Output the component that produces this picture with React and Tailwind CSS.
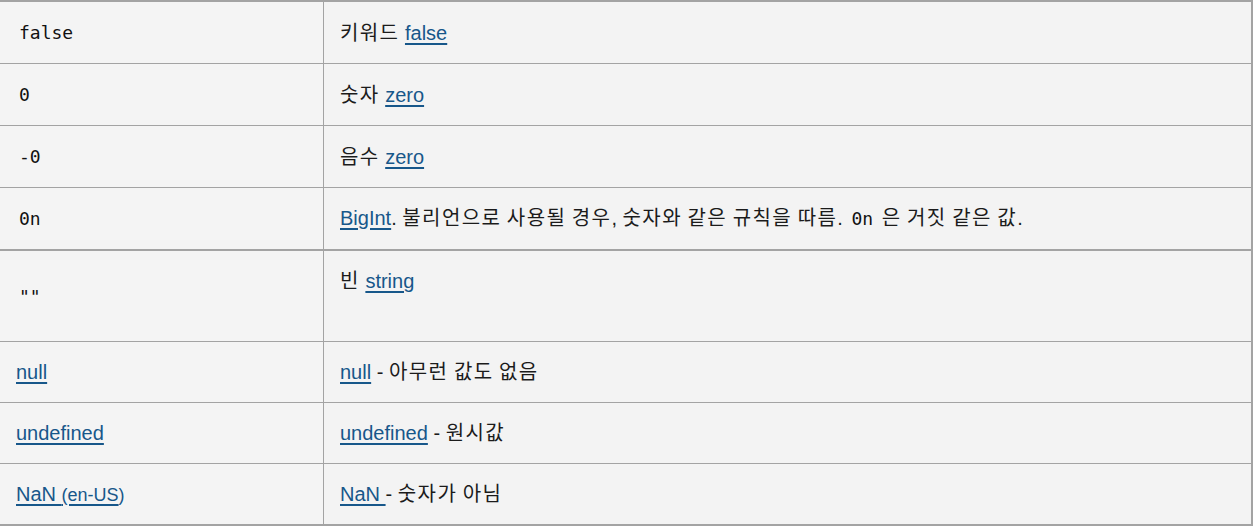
import React from "react";

const A = ({ children }) => (
  <a href="#" className="text-[#17578a] underline underline-offset-[3px] decoration-[1.5px]">
    {children}
  </a>
);

const K = ({ children }) => <span className="tracking-[1.4px]">{children}</span>;

const Code = ({ children }) => (
  <code className="px-[3px] text-[18px] text-[#111111]" style={{ fontFamily: '"DejaVu Sans Mono", monospace' }}>
    {children}
  </code>
);

function Row({ left, right, h, border = "border-b", rightTop = false }) {
  return (
    <div className={`flex ${border} border-[#a3a3a3]`} style={{ height: h }}>
      <div className="w-[324px] shrink-0 border-r border-[#a3a3a3] flex items-center pl-4 bg-[#f4f4f4]">
        <div className="leading-[30px]">{left}</div>
      </div>
      <div className={`flex-1 flex ${rightTop ? "items-start pt-[15px]" : "items-center"} pl-4 bg-[#f3f3f3]`}>
        <div className="leading-[30px]">{right}</div>
      </div>
    </div>
  );
}

export default function App() {
  return (
    <div
      className="w-[1253px] h-[526px] border-t-2 border-r-2 border-b-2 border-[#a3a3a3] bg-[#f4f4f4] text-[20px] text-[#1b1b1b]"
      style={{ fontFamily: '"Liberation Sans", Arial, "Noto Sans CJK KR", sans-serif' }}
    >
      <Row h={62} left={<Code>false</Code>} right={<><K>키워드</K> <A>false</A></>} />
      <Row h={62} left={<Code>0</Code>} right={<><K>숫자</K> <A>zero</A></>} />
      <Row h={62} left={<Code>-0</Code>} right={<><K>음수</K> <A>zero</A></>} />
      <Row
        h={63}
        border="border-b-2"
        left={<Code>0n</Code>}
        right={
          <>
            <A>BigInt</A>. <K>불리언으로</K> <K>사용될</K> <K>경우</K>, <K>숫자와</K> <K>같은</K> <K>규칙을</K> <K>따름</K>. <Code>0n</Code> <K>은</K> <K>거짓</K> <K>같은</K> <K>값</K>.
          </>
        }
      />
      <Row h={91} rightTop left={<Code>""</Code>} right={<><K>빈</K> <A>string</A></>} />
      <Row h={61} left={<A>null</A>} right={<><A>null</A> - <K>아무런</K> <K>값도</K> <K>없음</K></>} />
      <Row h={61} left={<A>undefined</A>} right={<><A>undefined</A> - <K>원시값</K></>} />
      <Row
        h={60}
        border=""
        left={
          <>
            <A>NaN </A>
            <span className="text-[18px]">
              <A>(en-US</A>
              <span className="text-[#17578a]">)</span>
            </span>
          </>
        }
        right={<><A>NaN </A>- <K>숫자가</K> <K>아님</K></>}
      />
    </div>
  );
}
